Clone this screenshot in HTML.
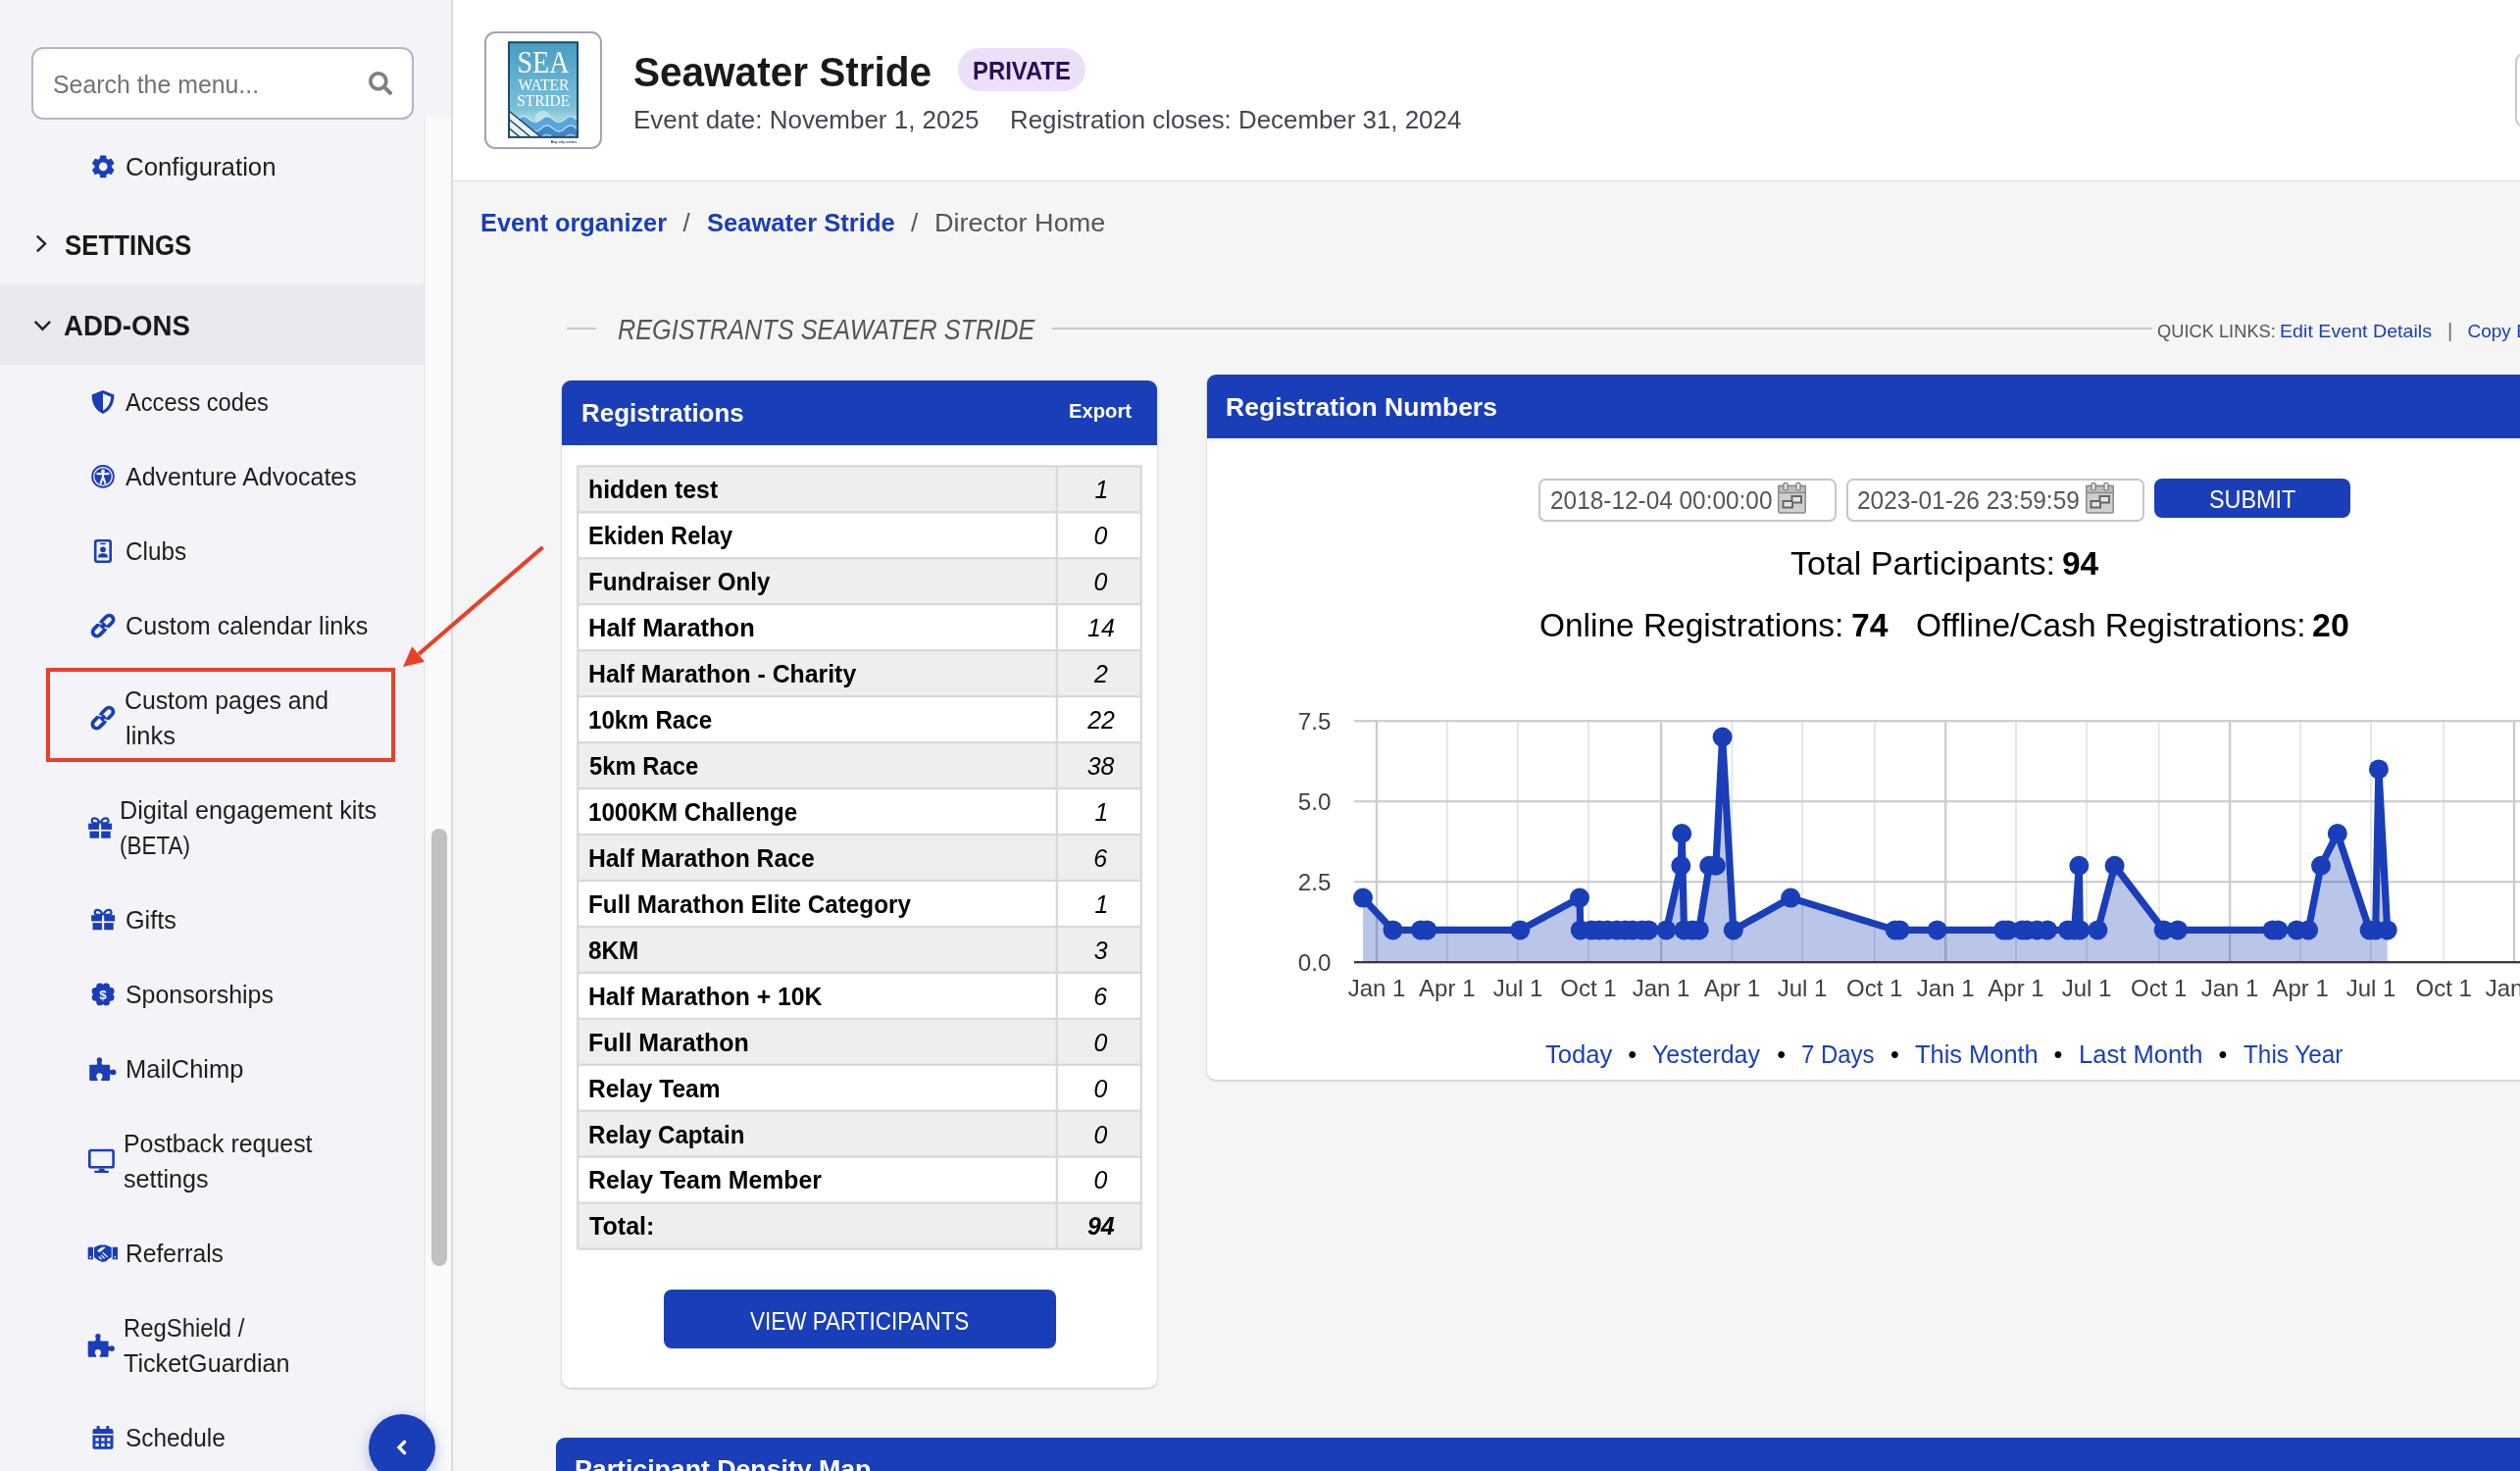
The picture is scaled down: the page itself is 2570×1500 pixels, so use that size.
<!DOCTYPE html>
<html lang="en"><head><meta charset="utf-8"><title>Director Home - Seawater Stride</title>
<style>
html,body{margin:0;padding:0}
body{width:2570px;height:1500px;overflow:hidden;background:#f5f5f5;font-family:'Liberation Sans',sans-serif;position:relative}
.abs{position:absolute;display:block}
.t{position:absolute;white-space:pre;display:block;transform-origin:0 50%}
svg text{font-family:'Liberation Sans',sans-serif}
</style></head>
<body>
<div class="abs" style="left:462.100px;top:0;width:2108px;height:183.900px;background:#fff;border-bottom:1.500px solid #dcdbe6"></div>
<div class="abs" style="left:0;top:0;width:459.900px;height:1500px;background:#f4f3f8;border-right:2.200px solid #dad9e5"></div>
<div class="abs" style="left:432px;top:120px;width:26px;height:1381px;background:#fafafa;border-left:2px solid #ebebeb"></div>
<div class="abs" style="left:0;top:290px;width:432.500px;height:81.500px;background:#eae9ef"></div>
<div class="abs" style="left:440px;top:844.700px;width:16px;height:446px;border-radius:8px;background:#c1c1c1"></div>
<div class="abs" style="left:32px;top:48px;width:386px;height:70px;border:2px solid #b6b4c6;border-radius:12px;background:#fff"></div>
<div class="abs" style="left:47px;top:681px;width:348px;height:88px;border:4px solid #e8402a"></div>
<svg class="abs" style="left:400px;top:540px" width="170" height="150" viewBox="400 540 170 150"><path d="M553.600,558 L427,667" stroke="#e8402a" stroke-width="4.200" fill="none"/><path d="M411,679.900 L420.200,659.300 L433,674.800 Z" fill="#e8402a"/></svg>
<div class="abs" style="left:494.200px;top:32.200px;width:115.400px;height:115.500px;border:2px solid #a3a1b6;border-radius:11px;background:#fff"></div>
<svg class="abs" style="left:518px;top:42px;will-change:transform" width="72" height="106" viewBox="518 42 72 106">
<defs><linearGradient id="lg" x1="0" y1="0" x2="0" y2="1"><stop offset="0" stop-color="#479dc3"/><stop offset="0.700" stop-color="#7cc0da"/><stop offset="0.800" stop-color="#a5d6df"/><stop offset="1" stop-color="#3f74b8"/></linearGradient><clipPath id="lc"><rect x="519" y="43.200" width="70" height="96.700"/></clipPath></defs>
<rect x="519" y="43.200" width="70" height="96.700" fill="url(#lg)"/>
<g clip-path="url(#lc)">
<circle cx="553.500" cy="121" r="8" fill="#cfe9ea" opacity="0.700"/>
<path d="M528,121.5 q6,-6 12,0 t12,0 t12,0 t12,0 t12,0 t12,0 L600,145 L528,145 Z" fill="#5aa6dc" stroke="#bfe3ee" stroke-width="1.6"/>
<path d="M528,131.0 q6,-6 12,0 t12,0 t12,0 t12,0 t12,0 t12,0 L600,145 L528,145 Z" fill="#4385c9" stroke="#a9d8ea" stroke-width="1.6"/>
<path d="M528,140.5 q6,-6 12,0 t12,0 t12,0 t12,0 t12,0 t12,0 L600,145 L528,145 Z" fill="#3b6fb6" stroke="#a9d8ea" stroke-width="1.6"/>
<path d="M519,113 L552,140 L519,140 Z" fill="#e9f2ee"/>
<path d="M519,113 L552,140 M519,121.500 L541.500,140 M519,130.500 L530.500,140" stroke="#1f4a6b" stroke-width="1.500"/>
</g>
<rect x="519" y="43.200" width="70" height="96.700" fill="none" stroke="#1f4a6b" stroke-width="2"/>
<text x="554" y="74.200" text-anchor="middle" style="font-family:'Liberation Serif',serif" font-size="30.500" fill="#fff" textLength="53" lengthAdjust="spacingAndGlyphs">SEA</text>
<text x="554.500" y="91.900" text-anchor="middle" style="font-family:'Liberation Serif',serif" font-size="15.800" fill="#fff" textLength="52" lengthAdjust="spacingAndGlyphs">WATER</text>
<text x="554.200" y="108.100" text-anchor="middle" style="font-family:'Liberation Serif',serif" font-size="15.800" fill="#fff" textLength="54" lengthAdjust="spacingAndGlyphs">STRIDE</text>
<text x="588.300" y="146.200" text-anchor="end" font-size="3.800" font-weight="700" fill="#1f3a5b">Bay city series</text>
</svg>
<div class="abs" style="left:977px;top:48.800px;width:129.800px;height:44px;border-radius:22px;background:#ebdff9"></div>
<div class="abs" style="left:2564.700px;top:54px;width:40px;height:72px;border:2.200px solid #c9c9c9;border-radius:9px;background:#fff"></div>
<div class="abs" style="left:577.700px;top:334px;width:30px;height:2px;background:#cbcbcb"></div>
<div class="abs" style="left:1073.300px;top:334px;width:1122px;height:2px;background:#cbcbcb"></div>
<div class="abs" style="left:573px;top:388px;width:607px;height:1026.600px;border-radius:9px;background:#fff;box-shadow:0 1px 3px rgba(0,0,0,.22)"></div>
<div class="abs" style="left:573px;top:388px;width:607px;height:66px;border-radius:9px 9px 0 0;background:#1a3eb8"></div>
<svg class="abs" style="left:580px;top:470px" width="600" height="810" viewBox="580 470 600 810">
<rect x="588.10" y="474.30" width="576.80" height="800.35" fill="#d8d8d8"/>
<rect x="590.30" y="476.50" width="486.40" height="44.75" fill="#eeeeee"/>
<rect x="1078.90" y="476.50" width="83.80" height="44.75" fill="#eeeeee"/>
<rect x="590.30" y="523.45" width="486.40" height="44.75" fill="#ffffff"/>
<rect x="1078.90" y="523.45" width="83.80" height="44.75" fill="#ffffff"/>
<rect x="590.30" y="570.40" width="486.40" height="44.75" fill="#eeeeee"/>
<rect x="1078.90" y="570.40" width="83.80" height="44.75" fill="#eeeeee"/>
<rect x="590.30" y="617.35" width="486.40" height="44.75" fill="#ffffff"/>
<rect x="1078.90" y="617.35" width="83.80" height="44.75" fill="#ffffff"/>
<rect x="590.30" y="664.30" width="486.40" height="44.75" fill="#eeeeee"/>
<rect x="1078.90" y="664.30" width="83.80" height="44.75" fill="#eeeeee"/>
<rect x="590.30" y="711.25" width="486.40" height="44.75" fill="#ffffff"/>
<rect x="1078.90" y="711.25" width="83.80" height="44.75" fill="#ffffff"/>
<rect x="590.30" y="758.20" width="486.40" height="44.75" fill="#eeeeee"/>
<rect x="1078.90" y="758.20" width="83.80" height="44.75" fill="#eeeeee"/>
<rect x="590.30" y="805.15" width="486.40" height="44.75" fill="#ffffff"/>
<rect x="1078.90" y="805.15" width="83.80" height="44.75" fill="#ffffff"/>
<rect x="590.30" y="852.10" width="486.40" height="44.75" fill="#eeeeee"/>
<rect x="1078.90" y="852.10" width="83.80" height="44.75" fill="#eeeeee"/>
<rect x="590.30" y="899.05" width="486.40" height="44.75" fill="#ffffff"/>
<rect x="1078.90" y="899.05" width="83.80" height="44.75" fill="#ffffff"/>
<rect x="590.30" y="946.00" width="486.40" height="44.75" fill="#eeeeee"/>
<rect x="1078.90" y="946.00" width="83.80" height="44.75" fill="#eeeeee"/>
<rect x="590.30" y="992.95" width="486.40" height="44.75" fill="#ffffff"/>
<rect x="1078.90" y="992.95" width="83.80" height="44.75" fill="#ffffff"/>
<rect x="590.30" y="1039.90" width="486.40" height="44.75" fill="#eeeeee"/>
<rect x="1078.90" y="1039.90" width="83.80" height="44.75" fill="#eeeeee"/>
<rect x="590.30" y="1086.85" width="486.40" height="44.75" fill="#ffffff"/>
<rect x="1078.90" y="1086.85" width="83.80" height="44.75" fill="#ffffff"/>
<rect x="590.30" y="1133.80" width="486.40" height="44.75" fill="#eeeeee"/>
<rect x="1078.90" y="1133.80" width="83.80" height="44.75" fill="#eeeeee"/>
<rect x="590.30" y="1180.75" width="486.40" height="44.75" fill="#ffffff"/>
<rect x="1078.90" y="1180.75" width="83.80" height="44.75" fill="#ffffff"/>
<rect x="590.30" y="1227.70" width="486.40" height="44.75" fill="#eeeeee"/>
<rect x="1078.90" y="1227.70" width="83.80" height="44.75" fill="#eeeeee"/>
</svg>
<div class="abs" style="left:677px;top:1315px;width:400px;height:60px;border-radius:8px;background:#1a3eb8"></div>
<div class="abs" style="left:1231px;top:382.300px;width:1400px;height:718.700px;border-radius:9px;background:#fff;box-shadow:0 1px 3px rgba(0,0,0,.22)"></div>
<div class="abs" style="left:1231px;top:382.300px;width:1400px;height:65.200px;border-radius:9px 9px 0 0;background:#1a3eb8"></div>
<div class="abs" style="left:1569px;top:488px;width:299.500px;height:40px;border:2px solid #c6c6c6;border-radius:7px;background:#fff"></div>
<div class="abs" style="left:1883.400px;top:488px;width:299.500px;height:40px;border:2px solid #c6c6c6;border-radius:7px;background:#fff"></div>
<svg class="abs" style="left:1812.8px;top:492.3px" width="29" height="32" viewBox="0 0 29 32"><rect x="0.800" y="3.500" width="27.400" height="27.500" rx="1.500" fill="#cfcfcf" stroke="#8a8a8a" stroke-width="1.500"/><rect x="0.800" y="3.500" width="27.400" height="7" fill="#bdbdbd" stroke="#8a8a8a" stroke-width="1.500"/><rect x="6" y="0.500" width="4" height="7.500" rx="1.500" fill="#e8e8e8" stroke="#777" stroke-width="1.200"/><rect x="19" y="0.500" width="4" height="7.500" rx="1.500" fill="#e8e8e8" stroke="#777" stroke-width="1.200"/><path d="M5.500,25.500 L5.500,19 L14.500,19 L14.500,14 L24,14 L24,20.500 L15,20.500 L15,25.500 Z" fill="#e4e4e4" stroke="#666" stroke-width="2"/></svg>
<svg class="abs" style="left:2126.6px;top:492.3px" width="29" height="32" viewBox="0 0 29 32"><rect x="0.800" y="3.500" width="27.400" height="27.500" rx="1.500" fill="#cfcfcf" stroke="#8a8a8a" stroke-width="1.500"/><rect x="0.800" y="3.500" width="27.400" height="7" fill="#bdbdbd" stroke="#8a8a8a" stroke-width="1.500"/><rect x="6" y="0.500" width="4" height="7.500" rx="1.500" fill="#e8e8e8" stroke="#777" stroke-width="1.200"/><rect x="19" y="0.500" width="4" height="7.500" rx="1.500" fill="#e8e8e8" stroke="#777" stroke-width="1.200"/><path d="M5.500,25.500 L5.500,19 L14.500,19 L14.500,14 L24,14 L24,20.500 L15,20.500 L15,25.500 Z" fill="#e4e4e4" stroke="#666" stroke-width="2"/></svg>
<div class="abs" style="left:2197.300px;top:487.800px;width:199.800px;height:40px;border-radius:8px;background:#1a3eb8"></div>
<svg class="abs" style="left:0;top:690px;will-change:transform" width="2570" height="350" viewBox="0 690 2570 350">
<rect x="1474.8" y="735" width="2" height="246" fill="#e6e6e6"/>
<rect x="1547.0" y="735" width="2" height="246" fill="#e6e6e6"/>
<rect x="1619.0" y="735" width="2" height="246" fill="#e6e6e6"/>
<rect x="1765.4" y="735" width="2" height="246" fill="#e6e6e6"/>
<rect x="1837.0" y="735" width="2" height="246" fill="#e6e6e6"/>
<rect x="1910.8" y="735" width="2" height="246" fill="#e6e6e6"/>
<rect x="2055.0" y="735" width="2" height="246" fill="#e6e6e6"/>
<rect x="2127.0" y="735" width="2" height="246" fill="#e6e6e6"/>
<rect x="2200.8" y="735" width="2" height="246" fill="#e6e6e6"/>
<rect x="2345.1" y="735" width="2" height="246" fill="#e6e6e6"/>
<rect x="2417.0" y="735" width="2" height="246" fill="#e6e6e6"/>
<rect x="2491.2" y="735" width="2" height="246" fill="#e6e6e6"/>
<rect x="1402.8" y="735" width="2.4" height="246" fill="#ccc"/>
<rect x="1692.9" y="735" width="2.4" height="246" fill="#ccc"/>
<rect x="1983.0" y="735" width="2.4" height="246" fill="#ccc"/>
<rect x="2272.9" y="735" width="2.4" height="246" fill="#ccc"/>
<rect x="2562.8" y="735" width="2.4" height="246" fill="#ccc"/>
<rect x="1381" y="898.1" width="1200" height="2.2" fill="#ccc"/>
<rect x="1381" y="816.1" width="1200" height="2.2" fill="#ccc"/>
<rect x="1381" y="734.1" width="1200" height="2.2" fill="#ccc"/>
<path d="M1390.0,981.2 L1390.0,915.6 L1420.5,948.4 L1449.0,948.4 L1455.3,948.4 L1550.3,948.4 L1611.0,915.6 L1611.8,948.4 L1623.0,948.4 L1631.0,948.4 L1639.4,948.4 L1649.0,948.4 L1657.5,948.4 L1665.0,948.4 L1674.6,948.4 L1681.3,948.4 L1699.4,948.4 L1714.3,882.8 L1715.2,850.0 L1717.5,948.4 L1726.0,948.4 L1732.7,948.4 L1743.2,882.8 L1749.9,882.8 L1756.6,751.6 L1767.8,948.4 L1826.2,915.6 L1932.8,948.4 L1937.5,948.4 L1975.6,948.4 L2043.2,948.4 L2048.0,948.4 L2062.3,948.4 L2067.0,948.4 L2077.5,948.4 L2088.0,948.4 L2108.9,948.4 L2115.6,948.4 L2120.3,882.8 L2121.3,948.4 L2139.4,948.4 L2156.6,882.8 L2206.7,948.4 L2221.0,948.4 L2317.6,948.4 L2323.3,948.4 L2342.3,948.4 L2354.1,948.4 L2367.0,882.8 L2383.8,850.0 L2416.6,948.4 L2422.7,948.4 L2425.9,784.4 L2434.7,948.4 L2434.7,981.2 Z" fill="#1a3eb8" fill-opacity="0.3"/>
<rect x="1381" y="980.1" width="1200" height="2.2" fill="#333"/>
<path d="M1390.0,915.6 L1420.5,948.4 L1449.0,948.4 L1455.3,948.4 L1550.3,948.4 L1611.0,915.6 L1611.8,948.4 L1623.0,948.4 L1631.0,948.4 L1639.4,948.4 L1649.0,948.4 L1657.5,948.4 L1665.0,948.4 L1674.6,948.4 L1681.3,948.4 L1699.4,948.4 L1714.3,882.8 L1715.2,850.0 L1717.5,948.4 L1726.0,948.4 L1732.7,948.4 L1743.2,882.8 L1749.9,882.8 L1756.6,751.6 L1767.8,948.4 L1826.2,915.6 L1932.8,948.4 L1937.5,948.4 L1975.6,948.4 L2043.2,948.4 L2048.0,948.4 L2062.3,948.4 L2067.0,948.4 L2077.5,948.4 L2088.0,948.4 L2108.9,948.4 L2115.6,948.4 L2120.3,882.8 L2121.3,948.4 L2139.4,948.4 L2156.6,882.8 L2206.7,948.4 L2221.0,948.4 L2317.6,948.4 L2323.3,948.4 L2342.3,948.4 L2354.1,948.4 L2367.0,882.8 L2383.8,850.0 L2416.6,948.4 L2422.7,948.4 L2425.9,784.4 L2434.7,948.4" fill="none" stroke="#1a3eb8" stroke-width="7.2" stroke-linejoin="round"/>
<circle cx="1390.0" cy="915.6" r="10" fill="#1a3eb8"/>
<circle cx="1420.5" cy="948.4" r="10" fill="#1a3eb8"/>
<circle cx="1449.0" cy="948.4" r="10" fill="#1a3eb8"/>
<circle cx="1455.3" cy="948.4" r="10" fill="#1a3eb8"/>
<circle cx="1550.3" cy="948.4" r="10" fill="#1a3eb8"/>
<circle cx="1611.0" cy="915.6" r="10" fill="#1a3eb8"/>
<circle cx="1611.8" cy="948.4" r="10" fill="#1a3eb8"/>
<circle cx="1623.0" cy="948.4" r="10" fill="#1a3eb8"/>
<circle cx="1631.0" cy="948.4" r="10" fill="#1a3eb8"/>
<circle cx="1639.4" cy="948.4" r="10" fill="#1a3eb8"/>
<circle cx="1649.0" cy="948.4" r="10" fill="#1a3eb8"/>
<circle cx="1657.5" cy="948.4" r="10" fill="#1a3eb8"/>
<circle cx="1665.0" cy="948.4" r="10" fill="#1a3eb8"/>
<circle cx="1674.6" cy="948.4" r="10" fill="#1a3eb8"/>
<circle cx="1681.3" cy="948.4" r="10" fill="#1a3eb8"/>
<circle cx="1699.4" cy="948.4" r="10" fill="#1a3eb8"/>
<circle cx="1714.3" cy="882.8" r="10" fill="#1a3eb8"/>
<circle cx="1715.2" cy="850.0" r="10" fill="#1a3eb8"/>
<circle cx="1717.5" cy="948.4" r="10" fill="#1a3eb8"/>
<circle cx="1726.0" cy="948.4" r="10" fill="#1a3eb8"/>
<circle cx="1732.7" cy="948.4" r="10" fill="#1a3eb8"/>
<circle cx="1743.2" cy="882.8" r="10" fill="#1a3eb8"/>
<circle cx="1749.9" cy="882.8" r="10" fill="#1a3eb8"/>
<circle cx="1756.6" cy="751.6" r="10" fill="#1a3eb8"/>
<circle cx="1767.8" cy="948.4" r="10" fill="#1a3eb8"/>
<circle cx="1826.2" cy="915.6" r="10" fill="#1a3eb8"/>
<circle cx="1932.8" cy="948.4" r="10" fill="#1a3eb8"/>
<circle cx="1937.5" cy="948.4" r="10" fill="#1a3eb8"/>
<circle cx="1975.6" cy="948.4" r="10" fill="#1a3eb8"/>
<circle cx="2043.2" cy="948.4" r="10" fill="#1a3eb8"/>
<circle cx="2048.0" cy="948.4" r="10" fill="#1a3eb8"/>
<circle cx="2062.3" cy="948.4" r="10" fill="#1a3eb8"/>
<circle cx="2067.0" cy="948.4" r="10" fill="#1a3eb8"/>
<circle cx="2077.5" cy="948.4" r="10" fill="#1a3eb8"/>
<circle cx="2088.0" cy="948.4" r="10" fill="#1a3eb8"/>
<circle cx="2108.9" cy="948.4" r="10" fill="#1a3eb8"/>
<circle cx="2115.6" cy="948.4" r="10" fill="#1a3eb8"/>
<circle cx="2120.3" cy="882.8" r="10" fill="#1a3eb8"/>
<circle cx="2121.3" cy="948.4" r="10" fill="#1a3eb8"/>
<circle cx="2139.4" cy="948.4" r="10" fill="#1a3eb8"/>
<circle cx="2156.6" cy="882.8" r="10" fill="#1a3eb8"/>
<circle cx="2206.7" cy="948.4" r="10" fill="#1a3eb8"/>
<circle cx="2221.0" cy="948.4" r="10" fill="#1a3eb8"/>
<circle cx="2317.6" cy="948.4" r="10" fill="#1a3eb8"/>
<circle cx="2323.3" cy="948.4" r="10" fill="#1a3eb8"/>
<circle cx="2342.3" cy="948.4" r="10" fill="#1a3eb8"/>
<circle cx="2354.1" cy="948.4" r="10" fill="#1a3eb8"/>
<circle cx="2367.0" cy="882.8" r="10" fill="#1a3eb8"/>
<circle cx="2383.8" cy="850.0" r="10" fill="#1a3eb8"/>
<circle cx="2416.6" cy="948.4" r="10" fill="#1a3eb8"/>
<circle cx="2422.7" cy="948.4" r="10" fill="#1a3eb8"/>
<circle cx="2425.9" cy="784.4" r="10" fill="#1a3eb8"/>
<circle cx="2434.7" cy="948.4" r="10" fill="#1a3eb8"/>
<text x="1357.4" y="989.5" text-anchor="end" font-size="24.2" fill="#404040">0.0</text>
<text x="1357.4" y="907.5" text-anchor="end" font-size="24.2" fill="#404040">2.5</text>
<text x="1357.4" y="825.5" text-anchor="end" font-size="24.2" fill="#404040">5.0</text>
<text x="1357.4" y="743.5" text-anchor="end" font-size="24.2" fill="#404040">7.5</text>
<text x="1404.0" y="1016" text-anchor="middle" font-size="24" fill="#404040">Jan 1</text>
<text x="1475.8" y="1016" text-anchor="middle" font-size="24" fill="#404040">Apr 1</text>
<text x="1548.0" y="1016" text-anchor="middle" font-size="24" fill="#404040">Jul 1</text>
<text x="1620.0" y="1016" text-anchor="middle" font-size="24" fill="#404040">Oct 1</text>
<text x="1694.1" y="1016" text-anchor="middle" font-size="24" fill="#404040">Jan 1</text>
<text x="1766.4" y="1016" text-anchor="middle" font-size="24" fill="#404040">Apr 1</text>
<text x="1838.0" y="1016" text-anchor="middle" font-size="24" fill="#404040">Jul 1</text>
<text x="1911.8" y="1016" text-anchor="middle" font-size="24" fill="#404040">Oct 1</text>
<text x="1984.2" y="1016" text-anchor="middle" font-size="24" fill="#404040">Jan 1</text>
<text x="2056.0" y="1016" text-anchor="middle" font-size="24" fill="#404040">Apr 1</text>
<text x="2128.0" y="1016" text-anchor="middle" font-size="24" fill="#404040">Jul 1</text>
<text x="2201.8" y="1016" text-anchor="middle" font-size="24" fill="#404040">Oct 1</text>
<text x="2274.1" y="1016" text-anchor="middle" font-size="24" fill="#404040">Jan 1</text>
<text x="2346.1" y="1016" text-anchor="middle" font-size="24" fill="#404040">Apr 1</text>
<text x="2418.0" y="1016" text-anchor="middle" font-size="24" fill="#404040">Jul 1</text>
<text x="2492.2" y="1016" text-anchor="middle" font-size="24" fill="#404040">Oct 1</text>
<text x="2564.0" y="1016" text-anchor="middle" font-size="24" fill="#404040">Jan 1</text>
</svg>
<div class="abs" style="left:567px;top:1465.700px;width:2100px;height:80px;border-radius:9px 9px 0 0;background:#1a3eb8"></div>
<div class="abs" style="left:376px;top:1442px;width:68px;height:68px;border-radius:50%;background:#1a3eb8;box-shadow:0 4px 14px 1px rgba(26,62,184,.28)"></div>
<svg class="abs" style="left:396px;top:1462px" width="28" height="34" viewBox="396 1462 28 34"><path d="M412.600,1470.200 L407,1475.900 L412.600,1481.600" fill="none" stroke="#fff" stroke-width="3.400" stroke-linejoin="miter" stroke-linecap="round"/></svg>
<svg class="abs" style="left:0;top:0;will-change:transform" width="462" height="1500" viewBox="0 0 462 1500">
<g transform="translate(376,72.9) scale(0.04727)" fill="#808080"><path d="M505 442.7L405.3 343c-4.500-4.500-10.600-7-17-7H372c27.600-35.300 44-79.700 44-128C416 93.100 322.900 0 208 0S0 93.100 0 208s93.100 208 208 208c48.300 0 92.700-16.400 128-44v16.300c0 6.400 2.500 12.500 7 17l99.700 99.700c9.400 9.400 24.600 9.400 33.900 0l28.300-28.300c9.400-9.400 9.400-24.600.1-34zM208 336c-70.700 0-128-57.200-128-128 0-70.700 57.200-128 128-128 70.700 0 128 57.200 128 128 0 70.700-57.200 128-128 128z"/></g>
<path d="M102.54,162.17 L102.84,159.26 L107.56,159.26 L107.86,162.17 L110.56,163.73 L113.24,162.54 L115.60,166.62 L113.22,168.34 L113.22,171.46 L115.60,173.18 L113.24,177.26 L110.56,176.07 L107.86,177.63 L107.56,180.54 L102.84,180.54 L102.54,177.63 L99.84,176.07 L97.16,177.26 L94.80,173.18 L97.18,171.46 L97.18,168.34 L94.80,166.62 L97.16,162.54 L99.84,163.73Z M100.08,169.90 a5.12,5.12 0 1,0 10.25,0 a5.12,5.12 0 1,0 -10.25,0Z" fill="#1a3eb8" fill-rule="evenodd" stroke="#1a3eb8" stroke-width="1.6" stroke-linejoin="round"/>
<path d="M37.8,240.6 L46,248.5 L37.8,256.4" fill="none" stroke="#222" stroke-width="2.4" stroke-linejoin="miter"/>
<path d="M35.7,327.8 L43.4,335.7 L51.1,327.8" fill="none" stroke="#222" stroke-width="2.4" stroke-linejoin="miter"/>
<path d="M105,397.900 L116.400,402.600 C116.400,412.500 112,418.800 105,422 C98,418.800 93.600,412.500 93.600,402.600 Z" fill="#1a3eb8"/>
<path d="M105,401.300 L105,418.600 C109.800,415.800 112.800,411.200 113.200,404.700 Z" fill="#f4f3f8"/>
<circle cx="105" cy="485.900" r="11.800" fill="#1a3eb8"/>
<circle cx="105" cy="485.900" r="9.300" fill="none" stroke="#f4f3f8" stroke-width="1.300"/>
<circle cx="105" cy="480.300" r="1.900" fill="#f4f3f8"/>
<path d="M99.300,483.100 L110.700,483.100 M105,483.100 L105,487.600 M104.600,487 L102.600,493 M105.400,487 L107.400,493" stroke="#f4f3f8" stroke-width="2.100" stroke-linecap="round" fill="none"/>
<rect x="97.200" y="551.200" width="15.500" height="21.500" rx="2" fill="none" stroke="#1a3eb8" stroke-width="2.600"/>
<circle cx="105" cy="560.300" r="2.900" fill="#1a3eb8"/>
<path d="M100,568.600 C100,565 102.200,564.200 105,564.200 C107.800,564.200 110,565 110,568.600 Z" fill="#1a3eb8"/>
<rect x="102.300" y="553.700" width="5.400" height="1.500" fill="#1a3eb8"/>
<g transform="translate(105.1,638.1) rotate(-45)" fill="none" stroke="#1a3eb8" stroke-width="3.7"><rect x="-13.15" y="-4.25" width="14.50" height="8.50" rx="4.25"/><rect x="-1.35" y="-4.25" width="14.50" height="8.50" rx="4.25"/><path d="M-2.6,-7.4 L0.2,-2.2 M2.6,7.4 L-0.2,2.2" stroke="#f4f3f8" stroke-width="1.500"/></g>
<g transform="translate(104.9,732.1) rotate(-45)" fill="none" stroke="#1a3eb8" stroke-width="3.7"><rect x="-13.15" y="-4.25" width="14.50" height="8.50" rx="4.25"/><rect x="-1.35" y="-4.25" width="14.50" height="8.50" rx="4.25"/><path d="M-2.6,-7.4 L0.2,-2.2 M2.6,7.4 L-0.2,2.2" stroke="#f4f3f8" stroke-width="1.500"/></g>
<g fill="#1a3eb8"><rect x="90.1" y="839.7" width="10.900" height="6.200"/><rect x="103.2" y="839.7" width="10.900" height="6.200"/><rect x="91.5" y="847.6" width="9.500" height="7.100"/><rect x="103.2" y="847.6" width="9.500" height="7.100"/><path d="M101.5,839.5 c-1.500,-6.500 -9.500,-6.500 -7.500,-1.200 c0.800,1.300 3,1.200 7.500,1.200 M102.7,839.5 c1.500,-6.500 9.500,-6.500 7.500,-1.200 c-0.800,1.300 -3,1.200 -7.500,1.200" fill="none" stroke="#1a3eb8" stroke-width="2.300"/></g>
<g fill="#1a3eb8"><rect x="93.1" y="933.2" width="10.900" height="6.200"/><rect x="106.2" y="933.2" width="10.900" height="6.200"/><rect x="94.5" y="941.1" width="9.500" height="7.100"/><rect x="106.2" y="941.1" width="9.500" height="7.100"/><path d="M104.5,933.0 c-1.500,-6.500 -9.500,-6.500 -7.500,-1.200 c0.800,1.300 3,1.200 7.500,1.200 M105.7,933.0 c1.500,-6.500 9.500,-6.500 7.500,-1.200 c-0.800,1.300 -3,1.200 -7.500,1.200" fill="none" stroke="#1a3eb8" stroke-width="2.300"/></g>
<circle cx="112.86" cy="1017.11" r="3.700" fill="#1a3eb8"/>
<circle cx="108.31" cy="1021.66" r="3.700" fill="#1a3eb8"/>
<circle cx="101.89" cy="1021.66" r="3.700" fill="#1a3eb8"/>
<circle cx="97.34" cy="1017.11" r="3.700" fill="#1a3eb8"/>
<circle cx="97.34" cy="1010.69" r="3.700" fill="#1a3eb8"/>
<circle cx="101.89" cy="1006.14" r="3.700" fill="#1a3eb8"/>
<circle cx="108.31" cy="1006.14" r="3.700" fill="#1a3eb8"/>
<circle cx="112.86" cy="1010.69" r="3.700" fill="#1a3eb8"/>
<circle cx="105.1" cy="1013.9" r="9.600" fill="#1a3eb8"/>
<text x="105.1" y="1018.7" text-anchor="middle" font-size="13.500" font-weight="700" fill="#f4f3f8">$</text>
<g fill="#1a3eb8"><rect x="91.2" y="1085.7" width="20.900" height="16.200" rx="0.800"/><circle cx="101.4" cy="1080.9" r="2.700"/><path d="M103.0,1081.7 l1.600,5.500 l-6.400,0 l1.600,-5.500 z"/><circle cx="115.5" cy="1093.3" r="2.900"/><path d="M114.7,1091.7 l-5.500,-1.700 l0,6.600 l5.500,-1.700 z"/><circle cx="101.4" cy="1097.4" r="3.100" fill="#f4f3f8"/><rect x="99.6" y="1099.2" width="3.600" height="3.500" fill="#f4f3f8"/></g>
<g fill="#1a3eb8"><rect x="89.7" y="1367.5" width="20.900" height="16.200" rx="0.800"/><circle cx="99.9" cy="1362.7" r="2.700"/><path d="M101.5,1363.5 l1.600,5.500 l-6.400,0 l1.600,-5.500 z"/><circle cx="114.0" cy="1375.1" r="2.900"/><path d="M113.2,1373.5 l-5.500,-1.700 l0,6.600 l5.500,-1.700 z"/><circle cx="99.9" cy="1379.2" r="3.100" fill="#f4f3f8"/><rect x="98.1" y="1381.0" width="3.600" height="3.500" fill="#f4f3f8"/></g>
<rect x="91.300" y="1173" width="24.300" height="17.300" rx="1.600" fill="none" stroke="#1a3eb8" stroke-width="2.600"/>
<path d="M101.200,1191.400 L106.300,1191.400 L107,1194.200 L100.500,1194.200 Z" fill="#1a3eb8"/><rect x="96.100" y="1193.700" width="14.900" height="2.300" rx="1" fill="#1a3eb8"/>
<path d="M89.700,1271.700 L95,1271.700 L95,1284.200 L89.700,1284.200 Z M114.700,1271.700 L120,1271.700 L120,1284.200 L114.700,1284.200 Z" fill="#1a3eb8"/>
<circle cx="92.300" cy="1282" r="0.900" fill="#f4f3f8"/><circle cx="117.400" cy="1282" r="0.900" fill="#f4f3f8"/>
<path d="M96,1272 L101.500,1269.400 L108,1269.400 L113.700,1272 L113.700,1282 L111,1283.500 L108,1286.300 L104.500,1287 L100,1285 L96,1282 Z" fill="#1a3eb8"/>
<path d="M99.200,1275.200 L103.800,1271.700 L107.800,1271.700 L103.200,1276 C102,1277.200 100.300,1277 99.200,1275.200 Z" fill="#f4f3f8"/>
<path d="M104.600,1277.300 L109.600,1281.800 M103.200,1280 L106.600,1283.300 M100.800,1281.500 L103.600,1284.200" stroke="#f4f3f8" stroke-width="1.300" fill="none"/>
<rect x="94.500" y="1457" width="21" height="20.800" rx="2" fill="#1a3eb8"/>
<rect x="98.600" y="1454" width="3.100" height="5.500" rx="0.800" fill="#1a3eb8"/><rect x="108.300" y="1454" width="3.100" height="5.500" rx="0.800" fill="#1a3eb8"/>
<rect x="94.500" y="1462" width="21" height="1.500" fill="#f4f3f8"/>
<rect x="97.4" y="1466.2" width="3.300" height="3.300" fill="#f4f3f8"/>
<rect x="103.3" y="1466.2" width="3.300" height="3.300" fill="#f4f3f8"/>
<rect x="109.2" y="1466.2" width="3.300" height="3.300" fill="#f4f3f8"/>
<rect x="97.4" y="1471.7" width="3.300" height="3.300" fill="#f4f3f8"/>
<rect x="103.3" y="1471.7" width="3.300" height="3.300" fill="#f4f3f8"/>
<rect x="109.2" y="1471.7" width="3.300" height="3.300" fill="#f4f3f8"/>
</svg>
<div id="txt" style="position:absolute;left:0;top:0;width:2570px;height:1500px;will-change:transform">
<span class="t" style="left:53.5px;top:72px;font-size:25.7px;line-height:28px;color:#737373;transform:scaleX(0.9680);">Search the menu...</span>
<span class="t" style="left:128.4px;top:156px;font-size:25.7px;line-height:28px;color:#1e1e1e;transform:scaleX(1.0052);">Configuration</span>
<span class="t" style="left:66.1px;top:234px;font-size:29px;line-height:32px;color:#1a1a1a;font-weight:700;transform:scaleX(0.8913);">SETTINGS</span>
<span class="t" style="left:65.4px;top:316px;font-size:29px;line-height:32px;color:#1a1a1a;font-weight:700;transform:scaleX(0.9522);">ADD-ONS</span>
<span class="t" style="left:128.3px;top:396px;font-size:25.7px;line-height:28px;color:#1e1e1e;transform:scaleX(0.9206);">Access codes</span>
<span class="t" style="left:128.3px;top:472px;font-size:25.7px;line-height:28px;color:#1e1e1e;transform:scaleX(0.9708);">Adventure Advocates</span>
<span class="t" style="left:128.0px;top:548px;font-size:25.7px;line-height:28px;color:#1e1e1e;transform:scaleX(0.9458);">Clubs</span>
<span class="t" style="left:127.9px;top:624px;font-size:25.7px;line-height:28px;color:#1e1e1e;transform:scaleX(0.9790);">Custom calendar links</span>
<span class="t" style="left:127.2px;top:700px;font-size:25.7px;line-height:28px;color:#1e1e1e;transform:scaleX(0.9654);">Custom pages and</span>
<span class="t" style="left:127.6px;top:736px;font-size:25.7px;line-height:28px;color:#1e1e1e;transform:scaleX(0.9892);">links</span>
<span class="t" style="left:122.1px;top:812px;font-size:25.7px;line-height:28px;color:#1e1e1e;transform:scaleX(0.9815);">Digital engagement kits</span>
<span class="t" style="left:122.2px;top:848px;font-size:25.7px;line-height:28px;color:#1e1e1e;transform:scaleX(0.8748);">(BETA)</span>
<span class="t" style="left:127.9px;top:924px;font-size:25.7px;line-height:28px;color:#1e1e1e;transform:scaleX(0.9806);">Gifts</span>
<span class="t" style="left:128.1px;top:1000px;font-size:25.7px;line-height:28px;color:#1e1e1e;transform:scaleX(0.9691);">Sponsorships</span>
<span class="t" style="left:127.5px;top:1076px;font-size:25.7px;line-height:28px;color:#1e1e1e;transform:scaleX(0.9921);">MailChimp</span>
<span class="t" style="left:125.7px;top:1152px;font-size:25.7px;line-height:28px;color:#1e1e1e;transform:scaleX(0.9700);">Postback request</span>
<span class="t" style="left:125.9px;top:1188px;font-size:25.7px;line-height:28px;color:#1e1e1e;transform:scaleX(0.9783);">settings</span>
<span class="t" style="left:128.0px;top:1264px;font-size:25.7px;line-height:28px;color:#1e1e1e;transform:scaleX(0.9588);">Referrals</span>
<span class="t" style="left:125.7px;top:1340px;font-size:25.7px;line-height:28px;color:#1e1e1e;transform:scaleX(0.9289);">RegShield /</span>
<span class="t" style="left:125.6px;top:1376px;font-size:25.7px;line-height:28px;color:#1e1e1e;transform:scaleX(0.9785);">TicketGuardian</span>
<span class="t" style="left:128.1px;top:1452px;font-size:25.7px;line-height:28px;color:#1e1e1e;transform:scaleX(0.9494);">Schedule</span>
<span class="t" style="left:646.4px;top:50px;font-size:42.5px;line-height:47px;color:#1a1a1a;font-weight:700;transform:scaleX(0.9535);">Seawater Stride</span>
<span class="t" style="left:992.1px;top:58px;font-size:25.9px;line-height:28px;color:#2e0c59;font-weight:700;transform:scaleX(0.9212);">PRIVATE</span>
<span class="t" style="left:645.5px;top:108px;font-size:25px;line-height:28px;color:#45464f;transform:scaleX(1.0393);">Event date: November 1, 2025</span>
<span class="t" style="left:1030.3px;top:108px;font-size:25px;line-height:28px;color:#45464f;transform:scaleX(1.0351);">Registration closes: December 31, 2024</span>
<span class="t" style="left:489.6px;top:213px;font-size:25.9px;line-height:28px;color:#1a3eb8;font-weight:700;transform:scaleX(0.9786);">Event organizer</span>
<span class="t" style="left:696.4px;top:213px;font-size:25.9px;line-height:28px;color:#555;">/</span>
<span class="t" style="left:720.6px;top:213px;font-size:25.9px;line-height:28px;color:#1a3eb8;font-weight:700;transform:scaleX(0.9868);">Seawater Stride</span>
<span class="t" style="left:929.0px;top:213px;font-size:25.9px;line-height:28px;color:#555;">/</span>
<span class="t" style="left:953.0px;top:213px;font-size:25.9px;line-height:28px;color:#555;transform:scaleX(1.0439);">Director Home</span>
<span class="t" style="left:629.5px;top:320px;font-size:28.9px;line-height:32px;color:#555;font-style:italic;transform:scaleX(0.8743);">REGISTRANTS SEAWATER STRIDE</span>
<span class="t" style="left:2200.0px;top:327px;font-size:19px;line-height:21px;color:#555;transform:scaleX(0.9617);">QUICK LINKS:</span>
<span class="t" style="left:2324.9px;top:327px;font-size:19px;line-height:21px;color:#1a3eb8;transform:scaleX(1.0338);">Edit Event Details</span>
<span class="t" style="left:2496.0px;top:325px;font-size:20.5px;line-height:23px;color:#6a6a6a;">|</span>
<span class="t" style="left:2516.5px;top:327px;font-size:19px;line-height:21px;color:#1a3eb8;">Copy Event</span>
<span class="t" style="left:592.8px;top:406px;font-size:26.5px;line-height:30px;color:#fff;font-weight:700;transform:scaleX(0.9785);">Registrations</span>
<span class="t" style="left:1090.3px;top:407px;font-size:20.5px;line-height:23px;color:#fff;font-weight:700;transform:scaleX(0.9873);">Export</span>
<span class="t" style="left:1250.1px;top:400px;font-size:26.5px;line-height:30px;color:#fff;font-weight:700;">Registration Numbers</span>
<span class="t" style="left:1580.6px;top:496px;font-size:25.3px;line-height:28px;color:#555;transform:scaleX(0.9642);">2018-12-04 00:00:00</span>
<span class="t" style="left:1894.2px;top:496px;font-size:25.3px;line-height:28px;color:#555;transform:scaleX(0.9655);">2023-01-26 23:59:59</span>
<span class="t" style="left:2252.5px;top:495px;font-size:25.3px;line-height:28px;color:#fff;transform:scaleX(0.9250);">SUBMIT</span>
<span class="t" style="left:1825.5px;top:556px;font-size:33.3px;line-height:37px;color:#000;transform:scaleX(1.0278);">Total Participants:</span>
<span class="t" style="left:2102.5px;top:556px;font-size:33.3px;line-height:37px;color:#000;font-weight:700;transform:scaleX(1.0027);">94</span>
<span class="t" style="left:1569.7px;top:619px;font-size:33.3px;line-height:37px;color:#000;transform:scaleX(1.0038);">Online Registrations:</span>
<span class="t" style="left:1887.7px;top:619px;font-size:33.3px;line-height:37px;color:#000;font-weight:700;transform:scaleX(1.0105);">74</span>
<span class="t" style="left:1953.9px;top:619px;font-size:33.3px;line-height:37px;color:#000;transform:scaleX(1.0051);">Offline/Cash Registrations:</span>
<span class="t" style="left:2358.4px;top:619px;font-size:33.3px;line-height:37px;color:#000;font-weight:700;transform:scaleX(1.0198);">20</span>
<span class="t" style="left:1575.7px;top:1061px;font-size:25.2px;line-height:28px;color:#1a3eb8;transform:scaleX(1.0166);">Today</span>
<span class="t" style="left:1660.3px;top:1061px;font-size:25.2px;line-height:28px;color:#000;">•</span>
<span class="t" style="left:1685.4px;top:1061px;font-size:25.2px;line-height:28px;color:#1a3eb8;transform:scaleX(0.9892);">Yesterday</span>
<span class="t" style="left:1812.2px;top:1061px;font-size:25.2px;line-height:28px;color:#000;">•</span>
<span class="t" style="left:1837.0px;top:1061px;font-size:25.2px;line-height:28px;color:#1a3eb8;transform:scaleX(0.9503);">7 Days</span>
<span class="t" style="left:1928.1px;top:1061px;font-size:25.2px;line-height:28px;color:#000;">•</span>
<span class="t" style="left:1952.7px;top:1061px;font-size:25.2px;line-height:28px;color:#1a3eb8;transform:scaleX(1.0091);">This Month</span>
<span class="t" style="left:2094.6px;top:1061px;font-size:25.2px;line-height:28px;color:#000;">•</span>
<span class="t" style="left:2119.7px;top:1061px;font-size:25.2px;line-height:28px;color:#1a3eb8;transform:scaleX(1.0157);">Last Month</span>
<span class="t" style="left:2262.6px;top:1061px;font-size:25.2px;line-height:28px;color:#000;">•</span>
<span class="t" style="left:2287.5px;top:1061px;font-size:25.2px;line-height:28px;color:#1a3eb8;transform:scaleX(0.9657);">This Year</span>
<span class="t" style="left:599.5px;top:485px;font-size:24.9px;line-height:28px;color:#000;font-weight:700;transform:scaleX(0.9953);">hidden test</span>
<span class="t" style="left:1116.6px;top:485px;font-size:24.9px;line-height:28px;color:#000;font-style:italic;">1</span>
<span class="t" style="left:599.6px;top:532px;font-size:24.9px;line-height:28px;color:#000;font-weight:700;transform:scaleX(0.9501);">Ekiden Relay</span>
<span class="t" style="left:1115.4px;top:532px;font-size:24.9px;line-height:28px;color:#000;font-style:italic;">0</span>
<span class="t" style="left:599.6px;top:579px;font-size:24.9px;line-height:28px;color:#000;font-weight:700;transform:scaleX(0.9716);">Fundraiser Only</span>
<span class="t" style="left:1115.4px;top:579px;font-size:24.9px;line-height:28px;color:#000;font-style:italic;">0</span>
<span class="t" style="left:599.5px;top:626px;font-size:24.9px;line-height:28px;color:#000;font-weight:700;transform:scaleX(1.0225);">Half Marathon</span>
<span class="t" style="left:1109.1px;top:626px;font-size:24.9px;line-height:28px;color:#000;font-style:italic;">14</span>
<span class="t" style="left:599.5px;top:673px;font-size:24.9px;line-height:28px;color:#000;font-weight:700;transform:scaleX(0.9977);">Half Marathon - Charity</span>
<span class="t" style="left:1116.1px;top:673px;font-size:24.9px;line-height:28px;color:#000;font-style:italic;">2</span>
<span class="t" style="left:599.7px;top:720px;font-size:24.9px;line-height:28px;color:#000;font-weight:700;transform:scaleX(0.9690);">10km Race</span>
<span class="t" style="left:1109.2px;top:720px;font-size:24.9px;line-height:28px;color:#000;font-style:italic;">22</span>
<span class="t" style="left:600.5px;top:767px;font-size:24.9px;line-height:28px;color:#000;font-weight:700;transform:scaleX(0.9571);">5km Race</span>
<span class="t" style="left:1108.7px;top:767px;font-size:24.9px;line-height:28px;color:#000;font-style:italic;">38</span>
<span class="t" style="left:599.7px;top:814px;font-size:24.9px;line-height:28px;color:#000;font-weight:700;transform:scaleX(0.9686);">1000KM Challenge</span>
<span class="t" style="left:1116.6px;top:814px;font-size:24.9px;line-height:28px;color:#000;font-style:italic;">1</span>
<span class="t" style="left:599.5px;top:861px;font-size:24.9px;line-height:28px;color:#000;font-weight:700;transform:scaleX(0.9928);">Half Marathon Race</span>
<span class="t" style="left:1115.2px;top:861px;font-size:24.9px;line-height:28px;color:#000;font-style:italic;">6</span>
<span class="t" style="left:599.6px;top:908px;font-size:24.9px;line-height:28px;color:#000;font-weight:700;transform:scaleX(0.9748);">Full Marathon Elite Category</span>
<span class="t" style="left:1116.6px;top:908px;font-size:24.9px;line-height:28px;color:#000;font-style:italic;">1</span>
<span class="t" style="left:600.4px;top:955px;font-size:24.9px;line-height:28px;color:#000;font-weight:700;transform:scaleX(0.9781);">8KM</span>
<span class="t" style="left:1115.7px;top:955px;font-size:24.9px;line-height:28px;color:#000;font-style:italic;">3</span>
<span class="t" style="left:599.5px;top:1002px;font-size:24.9px;line-height:28px;color:#000;font-weight:700;transform:scaleX(0.9938);">Half Marathon + 10K</span>
<span class="t" style="left:1115.2px;top:1002px;font-size:24.9px;line-height:28px;color:#000;font-style:italic;">6</span>
<span class="t" style="left:599.5px;top:1049px;font-size:24.9px;line-height:28px;color:#000;font-weight:700;transform:scaleX(1.0034);">Full Marathon</span>
<span class="t" style="left:1115.4px;top:1049px;font-size:24.9px;line-height:28px;color:#000;font-style:italic;">0</span>
<span class="t" style="left:599.6px;top:1096px;font-size:24.9px;line-height:28px;color:#000;font-weight:700;transform:scaleX(0.9850);">Relay Team</span>
<span class="t" style="left:1115.4px;top:1096px;font-size:24.9px;line-height:28px;color:#000;font-style:italic;">0</span>
<span class="t" style="left:599.6px;top:1143px;font-size:24.9px;line-height:28px;color:#000;font-weight:700;transform:scaleX(0.9684);">Relay Captain</span>
<span class="t" style="left:1115.4px;top:1143px;font-size:24.9px;line-height:28px;color:#000;font-style:italic;">0</span>
<span class="t" style="left:599.5px;top:1189px;font-size:24.9px;line-height:28px;color:#000;font-weight:700;transform:scaleX(0.9957);">Relay Team Member</span>
<span class="t" style="left:1115.4px;top:1189px;font-size:24.9px;line-height:28px;color:#000;font-style:italic;">0</span>
<span class="t" style="left:600.9px;top:1236px;font-size:24.9px;line-height:28px;color:#000;font-weight:700;transform:scaleX(1.0076);">Total:</span>
<span class="t" style="left:1108.9px;top:1236px;font-size:24.9px;line-height:28px;color:#000;font-weight:700;font-style:italic;">94</span>
<span class="t" style="left:765.0px;top:1333px;font-size:25.5px;line-height:28px;color:#fff;transform:scaleX(0.8806);">VIEW PARTICIPANTS</span>
<span class="t" style="left:586.2px;top:1483px;font-size:26.5px;line-height:30px;color:#fff;font-weight:700;transform:scaleX(1.0066);">Participant Density Map</span>
</div>
</body></html>
